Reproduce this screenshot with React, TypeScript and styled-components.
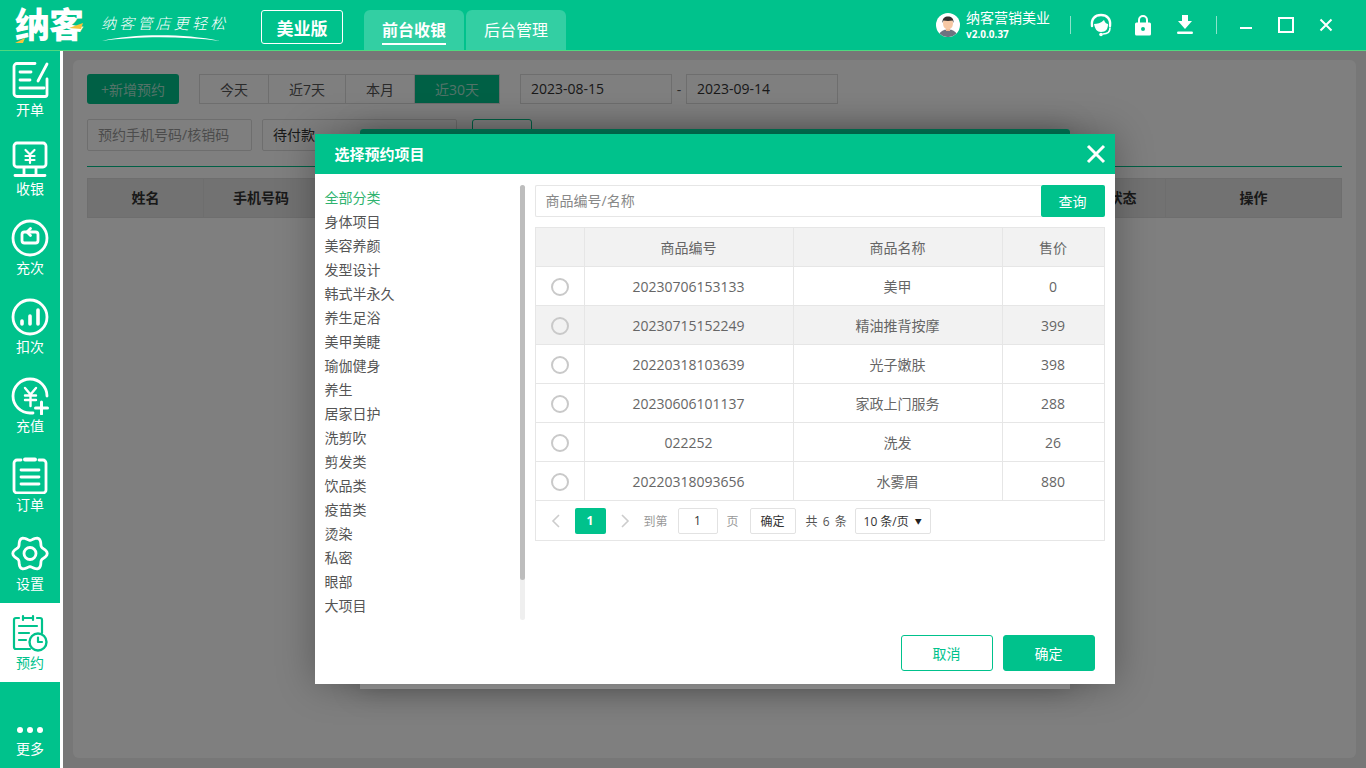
import React from 'react'
import styled, { createGlobalStyle } from 'styled-components'

const GREEN = '#00c28c'
const FONT = '"Open Sans", "Noto Sans CJK SC", "Liberation Sans", sans-serif'

const GlobalStyle = createGlobalStyle`
  html, body {
    margin: 0;
    padding: 0;
    background: #fff;
  }
  * {
    box-sizing: border-box;
  }
  body {
    font-family: ${FONT};
    font-size: 14px;
    color: #333;
  }
`

const Shell = styled.div`
  position: relative;
  width: 1366px;
  height: 768px;
  overflow: hidden;
  display: flex;
  flex-direction: column;
  background: #fff;
`

/* top bar */
const Header = styled.header`
  height: 51px;
  flex: none;
  display: flex;
  background: ${GREEN};
  border-bottom: 1px solid #4fd97f;
  position: relative;
  z-index: 5;
`

const Logo = styled.div`
  position: relative;
  width: 261px;
  flex: none;
  padding: 5px 0 0 15px;
`

const LogoMark = styled.div`
  font-size: 35px;
  line-height: 40px;
  font-weight: 900;
  color: #fff;
  letter-spacing: -1px;
`

const LogoAccent = styled.svg`
  position: absolute;
  left: 13px;
  top: 14px;
`

const Slogan = styled.div`
  position: absolute;
  left: 101px;
  top: 12px;
  font-size: 15px;
  line-height: 22px;
  font-weight: 300;
  font-style: italic;
  letter-spacing: 3.2px;
  color: #fff;
  white-space: nowrap;
`

const Swoosh = styled.svg`
  position: absolute;
  left: 102px;
  top: 33px;
`

const Edition = styled.div`
  width: 82px;
  height: 34px;
  margin-top: 10px;
  margin-right: 21px;
  flex: none;
  display: flex;
  align-items: center;
  justify-content: center;
  border: 1px solid #fff;
  border-radius: 3px;
  color: #fff;
  font-size: 17px;
  font-weight: 700;
`

const Tabs = styled.nav`
  display: flex;
  align-items: flex-end;
  gap: 2px;
  height: 50px;
`

const Tab = styled.div`
  width: 100px;
  height: 40px;
  border-radius: 6px 6px 0 0;
  background: #33cfa3;
  color: #fff;
  font-size: 16px;
  display: flex;
  align-items: center;
  justify-content: center;
`

const TabLabel = styled.span<{ $active?: boolean }>`
  font-weight: ${({ $active }) => ($active ? 700 : 400)};
  line-height: 26px;
  padding-top: 2px;
  border-bottom: 2px solid ${({ $active }) => ($active ? '#fff' : 'transparent')};
`

const HeaderRight = styled.div`
  margin-left: auto;
  display: flex;
  align-items: center;
  height: 50px;
`

const Account = styled.div`
  display: flex;
  align-items: center;
  gap: 6px;
  margin-right: 20px;
`

const AccountText = styled.div`
  color: #fff;
  display: flex;
  flex-direction: column;
`

const AccountName = styled.span`
  font-size: 14px;
  line-height: 18px;
`

const AccountVersion = styled.span`
  font-size: 10px;
  line-height: 14px;
  font-weight: 700;
`

const Divider = styled.span`
  width: 1px;
  height: 18px;
  background: rgba(255, 255, 255, 0.55);
`

const HeadIcons = styled.div`
  display: flex;
  align-items: center;
  width: 145px;
  padding-left: 9px;
`

const HeadSlot = styled.span`
  width: 42px;
  display: flex;
  justify-content: center;
`

const HeadIcon = styled.svg`
  flex: none;
  display: block;
`

const WindowButtons = styled.div`
  display: flex;
  align-items: center;
  gap: 24px;
  padding: 0 32px 0 21px;
`

/* body */
const Body = styled.div`
  flex: 1;
  display: flex;
  min-height: 0;
`

const Sidebar = styled.aside`
  width: 60px;
  flex: none;
  background: ${GREEN};
  display: flex;
  flex-direction: column;
  position: relative;
  z-index: 5;
`

const SideItem = styled.div<{ $active?: boolean }>`
  height: 79px;
  flex: none;
  display: flex;
  flex-direction: column;
  align-items: center;
  padding-top: 11px;
  background: ${({ $active }) => ($active ? '#fff' : 'transparent')};
  color: ${({ $active }) => ($active ? GREEN : '#fff')};
  font-size: 14px;
  line-height: 18px;

  &:first-child {
    height: 78px;
    padding-top: 10px;
  }
`

const SideMore = styled(SideItem)`
  margin-top: auto;
  height: 43px;
  padding-top: 0;
  gap: 5px;
  color: #fff;
`

const SideIcon = styled.svg`
  display: block;
  width: 38px;
  height: 38px;
  margin-bottom: 2px;
  flex: none;
`

const Main = styled.main`
  flex: 1;
  margin-left: 3px;
  background: #efefef;
  padding: 9px 10px 10px;
  min-width: 0;
`

const Panel = styled.div`
  height: 100%;
  background: #fff;
  border-radius: 6px;
  padding: 14px 14px 0;
`

const FilterRow = styled.div`
  display: flex;
  align-items: center;
  height: 30px;
`

const FilterRowSecond = styled(FilterRow)`
  margin-top: 15px;
  height: 32px;
  align-items: flex-start;
`

const AddButton = styled.div`
  width: 92px;
  height: 30px;
  background: ${GREEN};
  border-radius: 3px;
  color: #a9e6d2;
  font-size: 14px;
  display: flex;
  align-items: center;
  justify-content: center;
  margin-right: 20px;
`

const RangeGroup = styled.div`
  display: flex;
  height: 30px;
  border: 1px solid #ddd;
  margin-right: 20px;
`

const RangeItem = styled.div<{ $width: number; $active?: boolean }>`
  width: ${({ $width }) => $width}px;
  display: flex;
  align-items: center;
  justify-content: center;
  color: ${({ $active }) => ($active ? '#a9e6d2' : '#555')};
  background: ${({ $active }) => ($active ? GREEN : 'transparent')};
  font-size: 14px;

  & + & {
    border-left: 1px solid #ddd;
  }
`

const DateBox = styled.div`
  width: 152px;
  height: 30px;
  border: 1px solid #ddd;
  padding-left: 10px;
  line-height: 28px;
  color: #333;
`

const DateDash = styled.span`
  width: 14px;
  text-align: center;
  color: #555;
`

const PageInput = styled.div<{ $width: number }>`
  width: ${({ $width }) => $width}px;
  height: 32px;
  border: 1px solid #ddd;
  border-radius: 2px;
  padding-left: 10px;
  margin-right: 10px;
  line-height: 30px;
  color: #999;
  font-size: 14px;
`

const PageInputDark = styled(PageInput)`
  color: #333;
`

const SearchOutline = styled.div`
  width: 60px;
  height: 32px;
  margin-left: 5px;
  border: 1px solid ${GREEN};
  border-radius: 3px;
`

const GreenRule = styled.div`
  height: 1px;
  background: ${GREEN};
  margin-top: 15px;
`

const BackHead = styled.div`
  margin-top: 11px;
  height: 40px;
  display: grid;
  grid-template-columns: 116px 115px 1fr 86px 175px;
  background: #e6e6e6;
  border: 1px solid #ddd;
`

const BackHeadCell = styled.div`
  display: flex;
  align-items: center;
  justify-content: center;
  padding-bottom: 3px;
  font-weight: 700;
  font-size: 14px;
  color: #333;
  border-right: 1px solid #ddd;

  &:last-child {
    border-right: 0;
  }
`

/* modal layers */
const Scrim = styled.div<{ $alpha: number }>`
  position: absolute;
  top: 51px;
  left: 63px;
  right: 0;
  bottom: 0;
  padding-bottom: 1px;
  background: rgba(0, 0, 0, ${({ $alpha }) => $alpha});
  display: flex;
  align-items: center;
  justify-content: center;
`

const BackDialog = styled.div`
  width: 710px;
  height: 560px;
  background: #fff;
  border-radius: 3px 3px 0 0;
  box-shadow: 0 0 30px rgba(0, 0, 0, 0.25);
`

const BackDialogHead = styled.div`
  height: 40px;
  background: ${GREEN};
  border-radius: 3px 3px 0 0;
`

const Dialog = styled.section`
  width: 800px;
  height: 550px;
  background: #fff;
  display: flex;
  flex-direction: column;
  box-shadow: 0 0 36px rgba(0, 0, 0, 0.3);
`

const DialogHead = styled.div`
  height: 40px;
  flex: none;
  background: ${GREEN};
  display: flex;
  align-items: center;
  justify-content: space-between;
  padding: 0 8px 0 20px;
  color: #fff;
  font-size: 15px;
  font-weight: 700;
`

const DialogTitle = styled.span`
  line-height: 22px;
`

const DialogBody = styled.div`
  flex: 1;
  display: flex;
  min-height: 0;
  padding: 11px 10px 0 10px;
`

const CategoryColumn = styled.div`
  width: 200px;
  height: 435px;
  flex: none;
  position: relative;
  margin-right: 10px;
`

const CategoryList = styled.ul`
  list-style: none;
  margin: 0;
  padding: 1px 0 0;
`

const CategoryItem = styled.li<{ $active?: boolean }>`
  height: 24px;
  line-height: 24px;
  font-size: 14px;
  color: ${({ $active }) => ($active ? '#2fb36f' : '#555')};
`

const ScrollTrack = styled.div`
  position: absolute;
  top: 0;
  right: 0;
  width: 5px;
  height: 435px;
  background: #efefef;
  border-radius: 3px;
`

const ScrollThumb = styled.div`
  height: 395px;
  background: #bdbdbd;
  border-radius: 3px;
`

const ProductColumn = styled.div`
  flex: 1;
  min-width: 0;
`

const SearchBar = styled.div`
  display: flex;
  height: 32px;
  margin-bottom: 10px;
`

const SearchField = styled.div`
  flex: 1;
  border: 1px solid #e6e6e6;
  border-right: 0;
  border-radius: 2px 0 0 2px;
  padding-left: 10px;
  line-height: 30px;
  color: #888;
  font-size: 14px;
`

const SearchButton = styled.div`
  width: 64px;
  background: ${GREEN};
  border-radius: 2px;
  color: #fff;
  font-size: 14px;
  display: flex;
  align-items: center;
  justify-content: center;
`

const Table = styled.table`
  width: 569px;
  border-collapse: collapse;
  table-layout: fixed;
`

const HeadCell = styled.th<{ $width: number }>`
  width: ${({ $width }) => $width}px;
  height: 39px;
  padding: 0;
  background: #f2f2f2;
  border: 1px solid #e6e6e6;
  font-weight: 400;
  font-size: 14px;
  color: #666;
`

const Row = styled.tr<{ $hover?: boolean }>`
  background: ${({ $hover }) => ($hover ? '#f2f2f2' : '#fff')};
`

const Cell = styled.td`
  height: 39px;
  padding: 0;
  border: 1px solid #e6e6e6;
  text-align: center;
  font-size: 14px;
  color: #666;
`

const Radio = styled.span`
  display: inline-block;
  width: 18px;
  height: 18px;
  border: 2px solid #c9c9c9;
  border-radius: 50%;
  vertical-align: middle;
`

const Pager = styled.div`
  width: 570px;
  height: 40px;
  border: 1px solid #e6e6e6;
  border-top: 0;
  display: flex;
  align-items: center;
  padding-left: 14px;
  font-size: 12px;
`

const PagerArrow = styled.svg`
  display: block;
  flex: none;
`

const PagerCurrent = styled.span`
  width: 31px;
  height: 26px;
  margin: 0 13px 0 13px;
  background: ${GREEN};
  border-radius: 2px;
  color: #fff;
  font-weight: 700;
  display: flex;
  align-items: center;
  justify-content: center;
`

const PagerMuted = styled.span<{ $left: number; $right: number }>`
  color: #999;
  white-space: nowrap;
  margin: 0 ${({ $right }) => $right}px 0 ${({ $left }) => $left}px;
`

const PagerBox = styled.span<{ $width: number }>`
  width: ${({ $width }) => $width}px;
  height: 26px;
  border: 1px solid #e2e2e2;
  border-radius: 2px;
  display: flex;
  align-items: center;
  justify-content: center;
  gap: 6px;
  color: #333;
  flex: none;
  white-space: nowrap;
`

const PagerCaret = styled.span`
  font-size: 7px;
  color: #222;
`

const PagerText = styled.span`
  color: #555;
  white-space: nowrap;
  margin: 0 8px 0 10px;
  word-spacing: 2px;
`

const DialogFoot = styled.div`
  height: 36px;
  flex: none;
  margin-bottom: 13px;
  display: flex;
  justify-content: flex-end;
  align-items: flex-start;
  gap: 10px;
  padding-right: 20px;
`

const FootButton = styled.div<{ $primary?: boolean }>`
  width: 92px;
  height: 36px;
  border: 1px solid ${GREEN};
  border-radius: 3px;
  background: ${({ $primary }) => ($primary ? GREEN : '#fff')};
  color: ${({ $primary }) => ($primary ? '#fff' : GREEN)};
  display: flex;
  align-items: center;
  justify-content: center;
  font-size: 14px;
`

const iconProps = {
  viewBox: '0 0 38 38',
  fill: 'none',
  stroke: 'currentColor',
  strokeWidth: 2.8,
  strokeLinecap: 'round' as const,
  strokeLinejoin: 'round' as const,
}

// six soft lobes, the way the settings icon is drawn in the app
const gearPath = () => {
  const points: string[] = []
  for (let deg = 0; deg < 360; deg += 5) {
    const a = (deg * Math.PI) / 180
    const r = 15.2 + 2 * Math.cos(6 * a)
    points.push(`${(19 + r * Math.cos(a)).toFixed(2)} ${(18.500 + r * Math.sin(a)).toFixed(2)}`)
  }
  return `M${points.join('L')}Z`
}

const sideItems: { label: string; icon: React.ReactNode }[] = [
  {
    label: '开单',
    icon: (
      <>
        <path d="M24 2.500H6a3 3 0 0 0-3 3v27a3 3 0 0 0 3 3h28a2 2 0 0 0 2-2V18" />
        <path d="M9 11h11M9 19h10M9 27h24" />
        <path d="M36 3 27 20" />
      </>
    ),
  },
  {
    label: '收银',
    icon: (
      <>
        <rect x="3" y="3" width="32" height="24" rx="3" />
        <path d="M14.500 10 19 14.500 23.500 10M14.500 16h9M14.500 20h9M19 14.500V23" strokeWidth="2.200" />
        <path d="M13 28v6M25 28v6M4 35.500h30" />
      </>
    ),
  },
  {
    label: '充次',
    icon: (
      <>
        <circle cx="19" cy="19" r="17" />
        <path d="M16 13h-2.500a2.500 2.500 0 0 0-2.500 2.500v6a2.500 2.500 0 0 0 2.500 2.500h11a2.500 2.500 0 0 0 2.500-2.500v-6a2.500 2.500 0 0 0-2.500-2.500H17" />
        <path d="m19.500 9.500-3.500 3.500 3.500 3.500" />
      </>
    ),
  },
  {
    label: '扣次',
    icon: (
      <>
        <circle cx="19" cy="19" r="17" />
        <path d="M11 23v3M19 18v8M27 12v14" strokeWidth="3.600" />
      </>
    ),
  },
  {
    label: '充值',
    icon: (
      <>
        <path d="M36 19a17 17 0 1 0-17 17h3" />
        <path d="m14 11 5.500 6.500L25 11M14 18.500h11M14 23h11M19.500 17.500V29" strokeWidth="2.400" />
        <path d="M30.500 25v12M24.500 31h12" strokeWidth="3" />
      </>
    ),
  },
  {
    label: '订单',
    icon: (
      <>
        <path d="M10 4H6a3 3 0 0 0-3 3v27a3 3 0 0 0 3 3h26a3 3 0 0 0 3-3V7a3 3 0 0 0-3-3h-4" />
        <path d="M14 3.500h10" strokeWidth="4" />
        <path d="M10 14h18M10 21h18M10 28h18" />
      </>
    ),
  },
  {
    label: '设置',
    icon: (
      <>
        <path d={gearPath()} />
        <circle cx="19" cy="18.500" r="6" />
      </>
    ),
  },
  {
    label: '预约',
    icon: (
      <>
        <path d="M8 4H5a2 2 0 0 0-2 2v27a2 2 0 0 0 2 2h14M31 19V6a2 2 0 0 0-2-2h-3" strokeWidth="2.200" />
        <path d="M12 2v4M22 2v4M12 4h10" strokeWidth="2.200" />
        <path d="M8 12h18M8 19h10M8 26h7" strokeWidth="2.200" />
        <circle cx="27" cy="28" r="8.500" strokeWidth="2.400" />
        <path d="M27 23.500V28h4" strokeWidth="2.200" />
      </>
    ),
  },
]

const categories = [
  '全部分类', '身体项目', '美容养颜', '发型设计', '韩式半永久', '养生足浴', '美甲美睫', '瑜伽健身', '养生',
  '居家日护', '洗剪吹', '剪发类', '饮品类', '疫苗类', '烫染', '私密', '眼部', '大项目',
]

const products = [
  { code: '20230706153133', name: '美甲', price: '0' },
  { code: '20230715152249', name: '精油推背按摩', price: '399' },
  { code: '20220318103639', name: '光子嫩肤', price: '398' },
  { code: '20230606101137', name: '家政上门服务', price: '288' },
  { code: '022252', name: '洗发', price: '26' },
  { code: '20220318093656', name: '水雾眉', price: '880' },
]

const BackgroundPage = () => (
  <Main>
    <Panel>
      <FilterRow>
        <AddButton>+新增预约</AddButton>
        <RangeGroup>
          <RangeItem $width={68}>今天</RangeItem>
          <RangeItem $width={77}>近7天</RangeItem>
          <RangeItem $width={69}>本月</RangeItem>
          <RangeItem $width={85} $active>近30天</RangeItem>
        </RangeGroup>
        <DateBox>2023-08-15</DateBox>
        <DateDash>-</DateDash>
        <DateBox>2023-09-14</DateBox>
      </FilterRow>
      <FilterRowSecond>
        <PageInput $width={165}>预约手机号码/核销码</PageInput>
        <PageInputDark $width={195}>待付款</PageInputDark>
        <SearchOutline />
      </FilterRowSecond>
      <GreenRule />
      <BackHead>
        <BackHeadCell>姓名</BackHeadCell>
        <BackHeadCell>手机号码</BackHeadCell>
        <BackHeadCell />
        <BackHeadCell>状态</BackHeadCell>
        <BackHeadCell>操作</BackHeadCell>
      </BackHead>
    </Panel>
  </Main>
)

const App = () => (
  <Shell>
    <GlobalStyle />
    <Header>
      <Logo>
        <LogoMark>纳客</LogoMark>
        <LogoAccent width="72" height="32" viewBox="0 0 72 32">
          <path d="M2 29 12 24 10 29Z" fill="#f5c33b" />
          <path d="M56 14 70 9 68 15Z" fill="#f5c33b" />
        </LogoAccent>
        <Slogan>纳客管店更轻松</Slogan>
        <Swoosh width="118" height="10" viewBox="0 0 118 10">
          <path d="M0 8C30 1 80 0 118 8 80 3 35 3 0 8Z" fill="#fff" />
        </Swoosh>
      </Logo>
      <Edition>美业版</Edition>
      <Tabs>
        <Tab>
          <TabLabel $active>前台收银</TabLabel>
        </Tab>
        <Tab>
          <TabLabel>后台管理</TabLabel>
        </Tab>
      </Tabs>
      <HeaderRight>
        <Account>
          <svg width="24" height="24" viewBox="0 0 24 24">
            <circle cx="12" cy="12" r="12" fill="#fff" />
            <path d="M3.500 20.500C6 17 9 16.500 12 16.500s6 .5 8.500 4a12 12 0 0 1-17 0Z" fill="#6d7480" />
            <rect x="10" y="13" width="4" height="5" fill="#eeb893" />
            <ellipse cx="12" cy="10.500" rx="5" ry="6" fill="#f6c8a4" />
            <path d="M6.500 10C6 5 9 3.500 12 3.500S18 5 17.500 10L16.500 7.500C14 8 10 8 7.500 7.500Z" fill="#33302f" />
          </svg>
          <AccountText>
            <AccountName>纳客营销美业</AccountName>
            <AccountVersion>v2.0.0.37</AccountVersion>
          </AccountText>
        </Account>
        <Divider />
        <HeadIcons>
          <HeadSlot>
            <HeadIcon width="22" height="24" viewBox="0 0 22 24" fill="none" stroke="#fff" strokeLinecap="round">
              <path d="M2 13C1 6 5 2 11 2s10 4 9 11" strokeWidth="2.400" />
              <path d="M4 11c3 0 7-1 10-4 1 3 3 4 4 4 0 5-2 8-7 8-4 0-6-3-7-8Z" fill="#fff" stroke="none" />
              <path d="M20 15c0 4-3 6-7 6" strokeWidth="1.600" />
              <circle cx="11" cy="21.500" r="1.800" fill="#fff" stroke="none" />
            </HeadIcon>
          </HeadSlot>
          <HeadSlot>
            <HeadIcon width="16" height="22" viewBox="0 0 16 22">
              <path d="M4 9V6a4 4 0 0 1 8 0v3" fill="none" stroke="#fff" strokeWidth="2" />
              <path d="M1.500 8.500h13A1.500 1.500 0 0 1 16 10v10a1.500 1.500 0 0 1-1.500 1.500h-13A1.500 1.500 0 0 1 0 20V10a1.500 1.500 0 0 1 1.500-1.500ZM8 13a2 2 0 1 0 0 4 2 2 0 0 0 0-4Z" fill="#fff" fillRule="evenodd" />
            </HeadIcon>
          </HeadSlot>
          <HeadSlot>
            <HeadIcon width="16" height="20" viewBox="0 0 16 20">
              <path d="M5 0h6v6h4l-7 8-7-8h4Z" fill="#fff" />
              <rect x="0" y="16.500" width="16" height="2.500" rx="1.200" fill="#fff" />
            </HeadIcon>
          </HeadSlot>
        </HeadIcons>
        <Divider />
        <WindowButtons>
          <HeadIcon width="16" height="16" viewBox="0 0 16 16">
            <rect x="2" y="10" width="12" height="2" fill="#fff" />
          </HeadIcon>
          <HeadIcon width="16" height="16" viewBox="0 0 16 16" fill="none">
            <rect x="1" y="1" width="14" height="14" stroke="#fff" strokeWidth="2" />
          </HeadIcon>
          <HeadIcon width="16" height="16" viewBox="0 0 16 16" fill="none">
            <path d="M2.500 2.500 13.500 13.500M13.500 2.500 2.500 13.500" stroke="#fff" strokeWidth="2" />
          </HeadIcon>
        </WindowButtons>
      </HeaderRight>
    </Header>
    <Body>
      <Sidebar>
        {sideItems.map((item) => (
          <SideItem key={item.label} $active={item.label === '预约'}>
            <SideIcon {...iconProps}>{item.icon}</SideIcon>
            {item.label}
          </SideItem>
        ))}
        <SideMore>
          <svg width="30" height="10" viewBox="0 0 30 10" fill="#fff">
            <circle cx="5" cy="5" r="3" />
            <circle cx="15" cy="5" r="3" />
            <circle cx="25" cy="5" r="3" />
          </svg>
          更多
        </SideMore>
      </Sidebar>
      <BackgroundPage />
    </Body>

    <Scrim $alpha={0.17}>
      <BackDialog>
        <BackDialogHead />
      </BackDialog>
    </Scrim>
    <Scrim $alpha={0.4}>
      <Dialog>
        <DialogHead>
          <DialogTitle>选择预约项目</DialogTitle>
          <svg width="22" height="22" viewBox="0 0 22 22">
            <path d="M3 3 19 19M19 3 3 19" stroke="#fff" strokeWidth="3" />
          </svg>
        </DialogHead>
        <DialogBody>
          <CategoryColumn>
            <CategoryList>
              {categories.map((name, i) => (
                <CategoryItem key={name} $active={i === 0}>{name}</CategoryItem>
              ))}
            </CategoryList>
            <ScrollTrack>
              <ScrollThumb />
            </ScrollTrack>
          </CategoryColumn>
          <ProductColumn>
            <SearchBar>
              <SearchField>商品编号/名称</SearchField>
              <SearchButton>查询</SearchButton>
            </SearchBar>
            <Table>
              <thead>
                <tr>
                  <HeadCell $width={49} />
                  <HeadCell $width={209}>商品编号</HeadCell>
                  <HeadCell $width={209}>商品名称</HeadCell>
                  <HeadCell $width={102}>售价</HeadCell>
                </tr>
              </thead>
              <tbody>
                {products.map((p, i) => (
                  <Row key={p.code} $hover={i === 1}>
                    <Cell><Radio /></Cell>
                    <Cell>{p.code}</Cell>
                    <Cell>{p.name}</Cell>
                    <Cell>{p.price}</Cell>
                  </Row>
                ))}
              </tbody>
            </Table>
            <Pager>
              <PagerArrow width="12" height="14" viewBox="0 0 12 14" fill="none">
                <path d="M9 1 3 7l6 6" stroke="#ccc" strokeWidth="1.600" />
              </PagerArrow>
              <PagerCurrent>1</PagerCurrent>
              <PagerArrow width="12" height="14" viewBox="0 0 12 14" fill="none">
                <path d="m3 1 6 6-6 6" stroke="#ccc" strokeWidth="1.600" />
              </PagerArrow>
              <PagerMuted $left={13} $right={10}>到第</PagerMuted>
              <PagerBox $width={40}>1</PagerBox>
              <PagerMuted $left={9} $right={11}>页</PagerMuted>
              <PagerBox $width={46}>确定</PagerBox>
              <PagerText>共 6 条</PagerText>
              <PagerBox $width={76}>10 条/页<PagerCaret>▼</PagerCaret></PagerBox>
            </Pager>
          </ProductColumn>
        </DialogBody>
        <DialogFoot>
          <FootButton>取消</FootButton>
          <FootButton $primary>确定</FootButton>
        </DialogFoot>
      </Dialog>
    </Scrim>
  </Shell>
)

export default App
